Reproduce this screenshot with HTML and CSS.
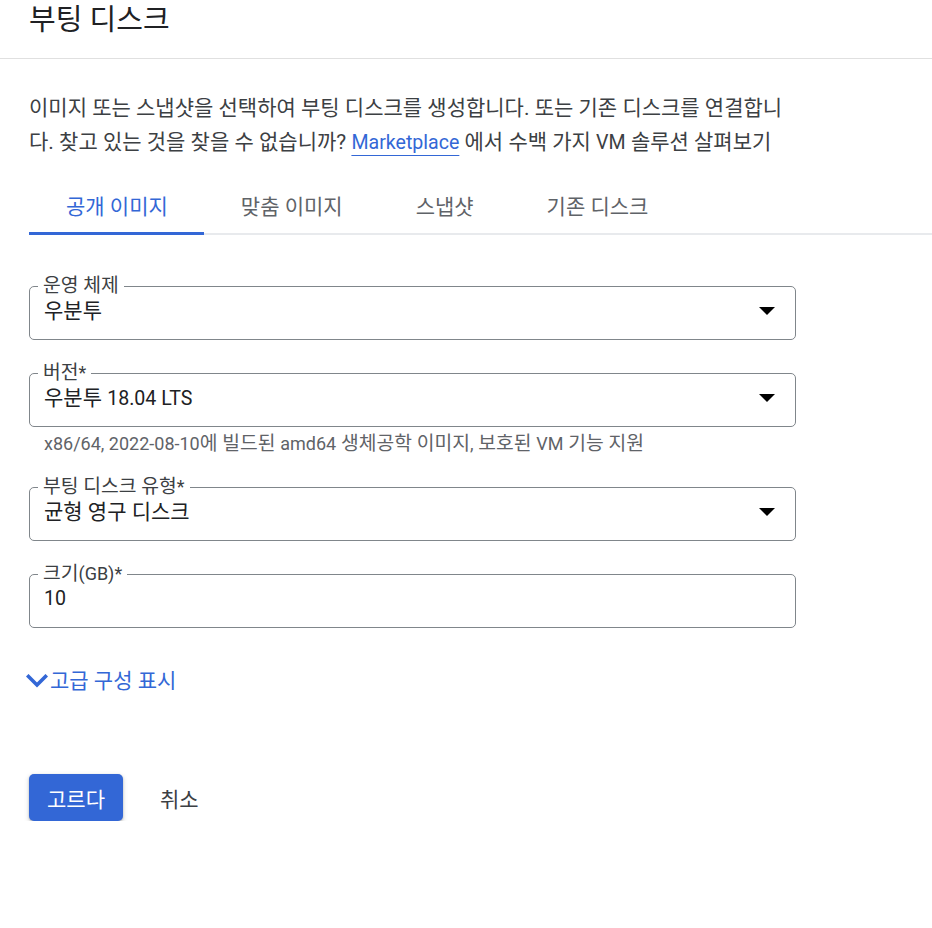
FILE: index.html
```html
<!DOCTYPE html>
<html lang="ko">
<head>
<meta charset="utf-8">
<title>부팅 디스크</title>
<link rel="stylesheet" href="styles.css">
</head>
<body>
<header class="header">
  <h1 class="title">부팅 디스크</h1>
</header>
<main class="content">
  <p class="desc">이미지 또는 스냅샷을 선택하여 부팅 디스크를 생성합니다. 또는 기존 디스크를 연결합니다. 찾고 있는 것을 찾을 수 없습니까? <a class="link en" href="#">Marketplace</a> 에서 수백 가지 <span class="en">VM</span> 솔루션 살펴보기</p>

  <div class="tabs">
    <div class="tab active">공개 이미지</div>
    <div class="tab">맞춤 이미지</div>
    <div class="tab">스냅샷</div>
    <div class="tab">기존 디스크</div>
  </div>

  <form class="form">
    <div class="group">
      <fieldset class="field">
        <legend class="field-label">운영 체제</legend>
        <div class="field-body">
          <span class="field-value">우분투</span>
          <svg class="arrow" viewBox="0 0 16 8"><path d="M0 0h16L8 8z" fill="#000"/></svg>
        </div>
      </fieldset>
    </div>
    <div class="group">
      <fieldset class="field">
        <legend class="field-label">버전<span class="en">*</span></legend>
        <div class="field-body">
          <span class="field-value">우분투 <span class="en">18.04 LTS</span></span>
          <svg class="arrow" viewBox="0 0 16 8"><path d="M0 0h16L8 8z" fill="#000"/></svg>
        </div>
      </fieldset>
      <div class="hint"><span class="en">x86/64, 2022-08-10</span>에 빌드된 <span class="en">amd64</span> 생체공학 이미지<span class="en">,</span> 보호된 <span class="en">VM</span> 기능 지원</div>
    </div>
    <div class="group">
      <fieldset class="field">
        <legend class="field-label">부팅 디스크 유형<span class="en">*</span></legend>
        <div class="field-body">
          <span class="field-value">균형 영구 디스크</span>
          <svg class="arrow" viewBox="0 0 16 8"><path d="M0 0h16L8 8z" fill="#000"/></svg>
        </div>
      </fieldset>
    </div>
    <div class="group last">
      <fieldset class="field">
        <legend class="field-label">크기<span class="en">(GB)*</span></legend>
        <div class="field-body">
          <span class="field-value en">10</span>
        </div>
      </fieldset>
    </div>
  </form>

  <button class="advanced" type="button">
    <svg class="chevron" viewBox="0 0 22 14"><path d="M2.5 2.5L11 11l8.5-8.5" fill="none" stroke="#3367d6" stroke-width="3.6" stroke-linecap="square"/></svg>
    <span>고급 구성 표시</span>
  </button>

  <div class="actions">
    <button class="btn btn-primary" type="button">고르다</button>
    <button class="btn btn-text" type="button">취소</button>
  </div>
</main>
</body>
</html>
```

FILE: styles.css
```css
body {
  margin: 0;
  background: #fff;
  color: #202124;
  font-family: Roboto, "Noto Sans CJK KR", sans-serif;
}

/* Latin runs are drawn a little smaller than the Hangul around them */
.en {
  font-size: 0.933em;
}

.header {
  padding: 0 29px 18px;
  border-bottom: 1px solid #e0e0e0;
}

.title {
  margin: 0;
  font-size: 29px;
  font-weight: 400;
  line-height: 40px;
  color: #202124;
}

.content {
  padding-left: 29px;
}

.desc {
  margin: 33px 0 0;
  width: 767px;
  font-size: 21px;
  line-height: 33.6px;
  color: #3c4043;
}

.link {
  color: #3367d6;
  text-decoration: underline;
  text-decoration-color: #3367d6;
  text-underline-offset: 6px;
  text-decoration-thickness: 1px;
}

.tabs {
  display: flex;
  margin-top: 20px;
  box-shadow: inset 0 -2px 0 #e8eaed;
}

.tab {
  padding: 14px 36px 11px 37px;
  font-size: 21px;
  line-height: 28px;
  color: #5f6368;
  border-bottom: 3px solid transparent;
}

.tab.active {
  color: #3367d6;
  border-bottom-color: #3367d6;
}

.form {
  margin-top: 42px;
  width: 767px;
}

.group {
  margin-bottom: 24px;
}

.group.last {
  margin-bottom: 0;
}

.field {
  margin: 0;
  padding: 0 20px 0 14px;
  border: 1px solid #80868b;
  border-radius: 5px;
  min-width: 0;
}

.field-label {
  padding: 0 5px;
  margin-left: -6px;
  font-size: 19.3px;
  line-height: 18px;
  color: #3c4043;
}

.field-body {
  display: flex;
  align-items: center;
  justify-content: space-between;
  height: 24px;
  padding: 4px 0 16px;
}

.field-value {
  font-size: 21px;
  line-height: 24px;
  color: #202124;
}

.field-value .en,
.field-value.en {
  font-size: 19.6px;
}

.arrow {
  width: 16px;
  height: 8px;
  display: block;
}

.hint {
  margin: 7px 0 5px;
  padding-left: 15px;
  font-size: 19.3px;
  line-height: 20px;
  color: #5f6368;
}

.advanced {
  display: flex;
  align-items: center;
  gap: 2px;
  margin: 39px 0 0 -3px;
  padding: 0;
  border: 0;
  background: none;
  color: #3367d6;
  font-family: inherit;
  font-size: 21px;
  line-height: 28px;
  cursor: pointer;
}

.chevron {
  width: 22px;
  height: 14px;
  display: block;
}

.actions {
  display: flex;
  gap: 19px;
  margin-top: 79px;
}

.btn {
  height: 47px;
  padding: 0 18px;
  border: 0;
  border-radius: 5px;
  font-family: inherit;
  font-size: 21px;
  cursor: pointer;
}

.btn-primary {
  background: #3367d6;
  color: #fff;
  box-shadow: 0 1px 2px rgba(60, 64, 67, 0.3), 0 2px 4px 1px rgba(60, 64, 67, 0.15);
}

.btn-text {
  background: none;
  color: #3c4043;
}
```
